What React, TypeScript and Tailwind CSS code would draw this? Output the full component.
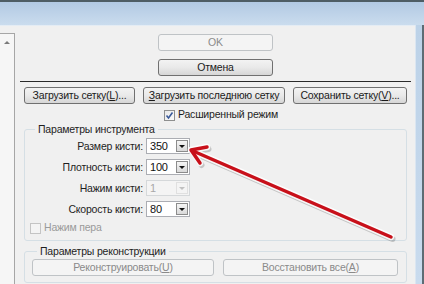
import { FC, ReactNode } from "react";

const font = { fontFamily: '"Liberation Sans", Arial, sans-serif' };

const Btn: FC<{ children: ReactNode; w: string; disabled?: boolean }> = ({ children, w, disabled }) => (
  <div
    className={`${w} h-[17px] shrink-0 flex items-center justify-center whitespace-nowrap rounded-[3px] border text-[10.5px] tracking-[-0.2px] leading-none ${
      disabled
        ? "border-[#bfc3c6] bg-[#f4f4f4] text-[#8a8a8a]"
        : "border-[#707070] bg-gradient-to-b from-[#f3f3f3] via-[#e9e9e9] to-[#d6d6d6] text-[#1a1a1a]"
    }`}
  >
    {children}
  </div>
);

const Combo: FC<{ value: string; disabled?: boolean }> = ({ value, disabled }) => (
  <div
    className={`w-[44px] h-[16px] flex items-stretch border ${
      disabled ? "border-[#d5d8da] bg-[#f4f4f4] text-[#a8a8a8]" : "border-[#abadb3] bg-white text-[#111]"
    }`}
  >
    <div className="flex-1 flex items-center pl-[3px] text-[11px] leading-none">{value}</div>
    <div
      className={`w-[12px] m-px flex items-center justify-center border ${
        disabled ? "border-[#e0e0e0] bg-[#f4f4f4]" : "border-[#8c8c8c] bg-gradient-to-b from-[#f5f5f5] to-[#d9d9d9]"
      }`}
    >
      <div
        className={`w-0 h-0 border-l-[3px] border-r-[3px] border-t-[3px] border-l-transparent border-r-transparent ${
          disabled ? "border-t-[#c0c0c0]" : "border-t-[#111]"
        }`}
      />
    </div>
  </div>
);

const Check: FC<{ checked?: boolean; disabled?: boolean }> = ({ checked, disabled }) => (
  <div
    className={`w-[11px] h-[11px] shrink-0 border flex items-center justify-center ${
      disabled ? "border-[#c4c4c4] bg-[#f4f4f4]" : "border-[#8e8f8f] bg-gradient-to-br from-[#e8e8e8] to-[#fafafa]"
    }`}
  >
    {checked && (
      <svg width="9" height="9" viewBox="0 0 9 9">
        <path d="M1.5 4.5 L3.5 7 L7.5 1.5" fill="none" stroke="#3a5a9a" strokeWidth="1.6" />
      </svg>
    )}
  </div>
);

const rows = [
  { label: "Размер кисти:", value: "350" },
  { label: "Плотность кисти:", value: "100" },
  { label: "Нажим кисти:", value: "1", disabled: true },
  { label: "Скорость кисти:", value: "80" },
];

const App: FC = () => {
  return (
    <div className="relative w-[424px] h-[284px] overflow-hidden flex flex-col text-[#1e1e1e]" style={font}>
      <div className="h-[2px] bg-[#4e5d65]" />
      <div className="h-[23px] bg-gradient-to-b from-[#b2c9e3] to-[#cadcee]" />
      <div className="flex flex-1 min-h-0">
        <div className="flex-1 flex bg-[#f0f0f0] pt-[7px] border-t border-[#e4ecf4]">
          {/* scroll pane */}
          <div className="w-[15px] self-stretch border-t border-r border-[#a6a6a6] bg-[#f6f6f6] flex justify-center pt-[7px]">
            <div className="w-0 h-0 border-l-[3px] border-r-[3px] border-b-[3px] border-l-transparent border-r-transparent border-b-[#7a7a7a]" />
          </div>

          {/* content */}
          <div className="flex-1 flex flex-col pl-[9px] pr-[8px] text-[10.5px] tracking-[-0.2px]">
            <div className="self-center mt-[1px]">
              <Btn w="w-[115px]" disabled>
                OK
              </Btn>
            </div>
            <div className="self-center mt-[8px]">
              <Btn w="w-[115px]">Отмена</Btn>
            </div>
            <div className="h-px bg-[#2a2a2a] mt-[5px] -mx-[4px]" />

            <div className="flex gap-[8px] mt-[5px]">
              <Btn w="w-[111px]">
                Загрузить сетку(<span className="underline">L</span>)...
              </Btn>
              <Btn w="w-[142px]">
                <span className="underline">З</span>агрузить последнюю сетку
              </Btn>
              <Btn w="w-[114px]">
                Сохранить сетку(<span className="underline">V</span>)...
              </Btn>
            </div>

            <div className="flex items-center gap-[3px] pl-[140px] mt-[5px] h-[12px] whitespace-nowrap">
              <Check checked />
              <span>Расширенный режим</span>
            </div>

            <fieldset className="border border-[#d5dfe5] rounded-[3px] mt-[1px] px-[5px] pb-[6px]">
              <legend className="ml-[5px] px-[3px] leading-[14px] whitespace-nowrap">Параметры инструмента</legend>
              <div className="grid grid-cols-[113px_44px] gap-x-[3px] gap-y-[5px] pt-[2px]">
                {rows.map((r) => (
                  <div key={r.label} className="contents">
                    <div className="text-right leading-[16px] whitespace-nowrap">{r.label}</div>
                    <Combo value={r.value} disabled={r.disabled} />
                  </div>
                ))}
              </div>
              <div className="flex items-center gap-[3px] mt-[5px] h-[12px] text-[#9a9a9a]">
                <Check disabled />
                <span>Нажим пера</span>
              </div>
            </fieldset>

            <fieldset className="border border-[#d5dfe5] rounded-[3px] mt-[3px] px-[7px] pb-[6px]">
              <legend className="ml-[5px] px-[3px] leading-[14px] whitespace-nowrap">Параметры реконструкции</legend>
              <div className="flex gap-[9px] pt-[1px]">
                <Btn w="w-[182px]" disabled>
                  Реконструировать(<span className="underline">U</span>)
                </Btn>
                <Btn w="w-[175px]" disabled>
                  Восстановить все(<span className="underline">A</span>)
                </Btn>
              </div>
            </fieldset>
          </div>
        </div>
        <div className="w-[9px] bg-gradient-to-b from-[#bcd2e8] to-[#c9dbee] border-l border-[#dbe6f1] border-r-2 border-r-[#5d6c74]" />
      </div>

      {/* red arrow annotation */}
      <svg className="absolute inset-0 pointer-events-none" width="424" height="284" viewBox="0 0 424 284">
        <g fill="none" strokeLinecap="round" strokeLinejoin="round">
          <g stroke="#000" strokeOpacity="0.18" strokeWidth="6" transform="translate(1.5 2)">
            <path d="M193 151 L391 237" />
            <path d="M207 147 L191 150 L200 163" />
          </g>
          <g stroke="#ffffff" strokeWidth="6.5" strokeOpacity="0.85">
            <path d="M193 151 L391 237" />
            <path d="M207 147 L191 150 L200 163" />
          </g>
          <g stroke="#c8101a" strokeWidth="3.5">
            <path d="M193 151 L391 237" />
            <path d="M207 147 L191 150 L200 163" />
          </g>
        </g>
      </svg>
    </div>
  );
};

export default App;
